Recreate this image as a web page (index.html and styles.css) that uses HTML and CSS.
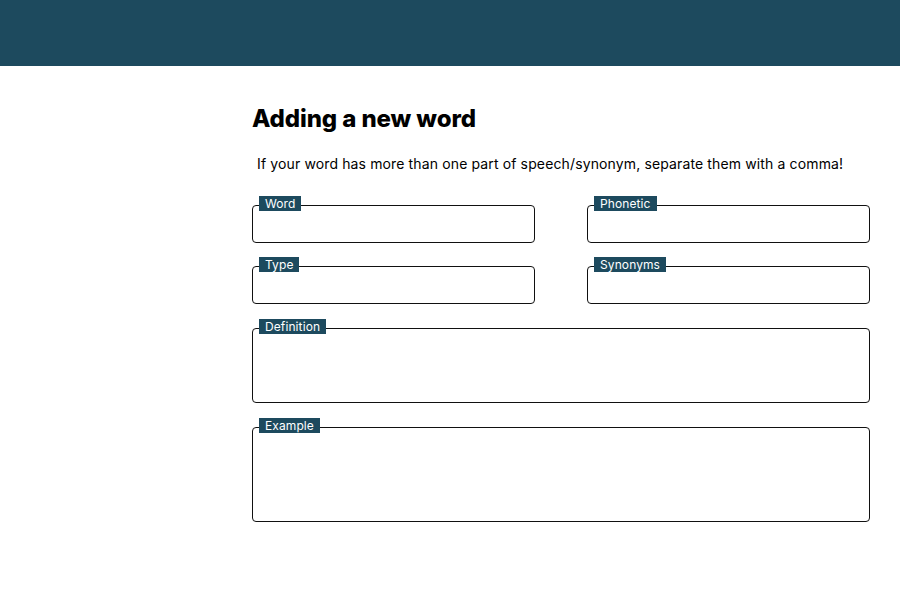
FILE: index.html
```
<!DOCTYPE html>
<html>
<head>
<meta charset="utf-8">
<link rel="stylesheet" href="styles.css">
</head>
<body>
<header class="topbar"></header>
<main class="content">
  <h1 class="title">Adding a new word</h1>
  <p class="hint">If your word has more than one part of speech/synonym, separate them with a comma!</p>
  <div class="grid">
    <div class="field short first"><span class="label">Word</span></div>
    <div class="field short first"><span class="label">Phonetic</span></div>
    <div class="field short"><span class="label">Type</span></div>
    <div class="field short"><span class="label">Synonyms</span></div>
    <div class="field wide def"><span class="label">Definition</span></div>
    <div class="field wide ex"><span class="label">Example</span></div>
  </div>
</main>
</body>
</html>
```
FILE: styles.css
```
* { box-sizing: border-box; }
body {
  margin: 0;
  font-family: Inter, "Noto Sans", sans-serif;
  background: #fff;
  color: #000;
}
.topbar {
  height: 66px;
  background: #1d4a5e;
}
.content {
  margin-left: 252px;
  width: 618px;
  padding-top: 38px;
}
.title {
  margin: 0;
  font-size: 24px;
  font-weight: 800;
  line-height: 30px;
  letter-spacing: -0.1px;
}
.hint {
  margin: 20px 0 0 5px;
  font-size: 14px;
  line-height: 20px;
  letter-spacing: 0.13px;
}
.grid {
  display: grid;
  grid-template-columns: 283px 283px;
  column-gap: 52px;
  margin-top: 31px;
}
.field {
  border: 1px solid #111;
  border-radius: 4px;
  height: 38px;
  margin-bottom: 24px;
}
.field.first { margin-bottom: 23px; }
.field.wide { grid-column: 1 / 3; }
.field.def { height: 75px; }
.field.ex { height: 95px; }
.label {
  display: inline-block;
  margin: -10px 0 0 6px;
  vertical-align: top;
  background: #1d4a5e;
  color: #fff;
  font-size: 12px;
  line-height: 15px;
  padding: 0 6px 0 6px;
  letter-spacing: 0.1px;
}
```
